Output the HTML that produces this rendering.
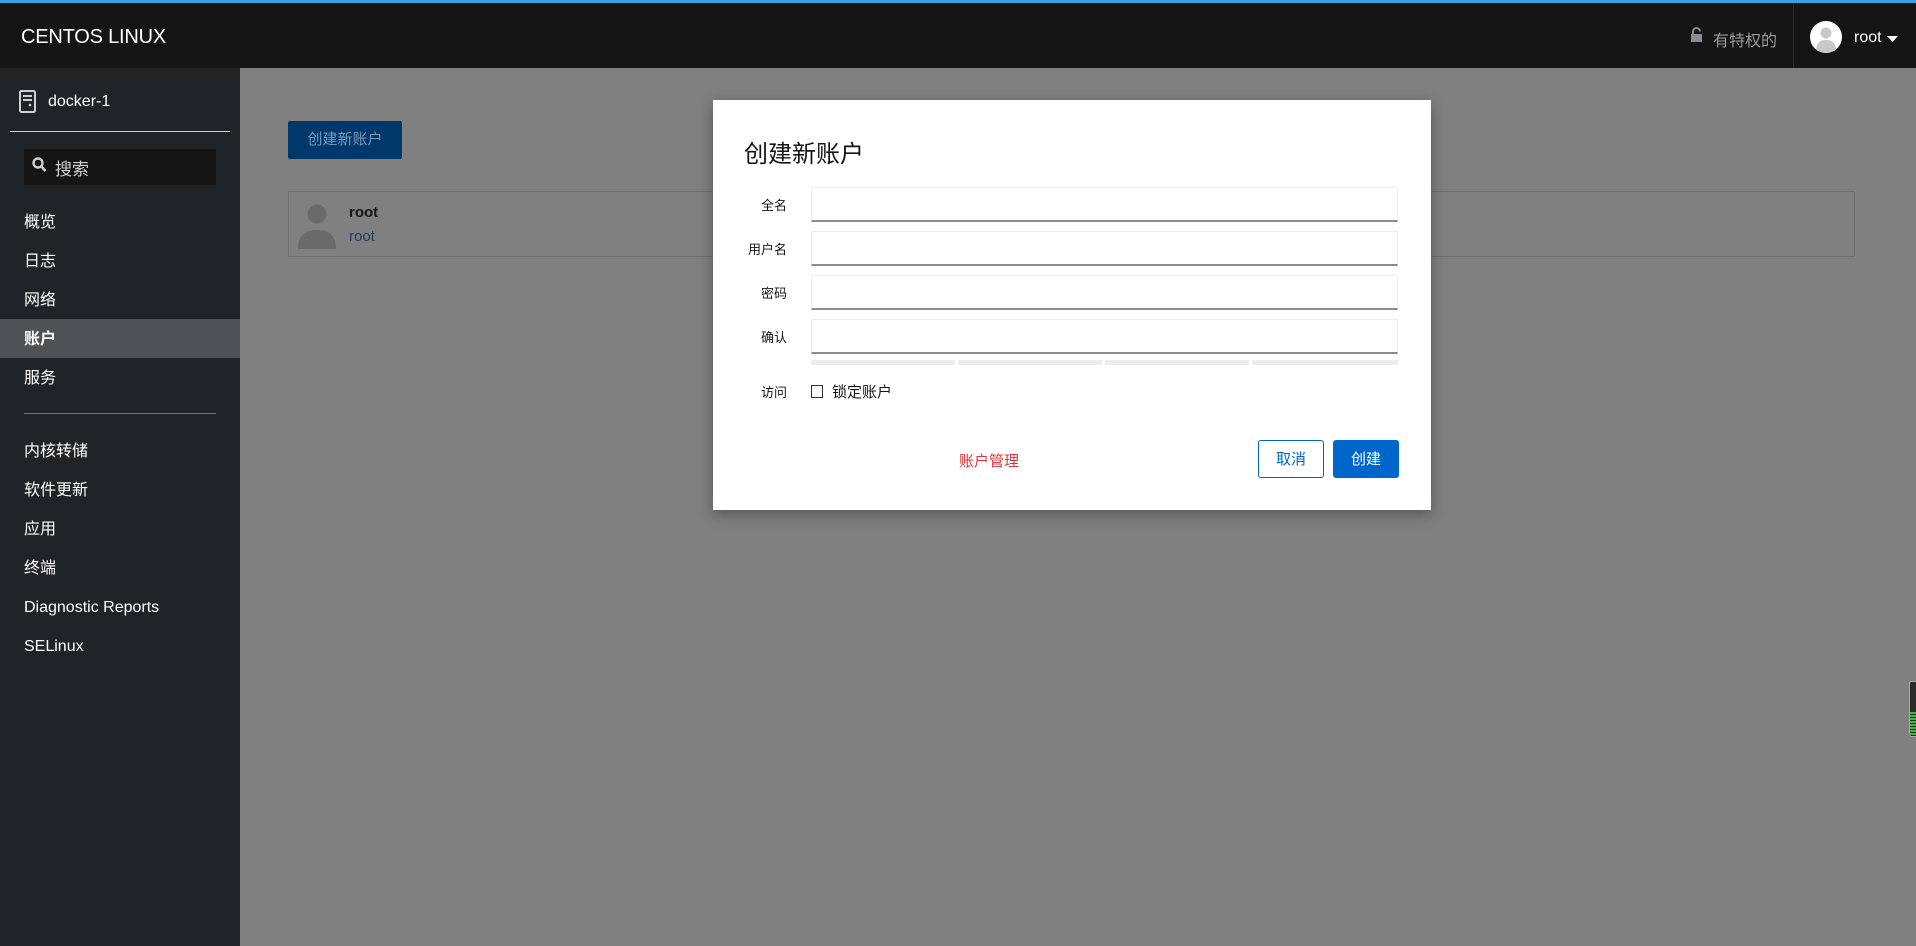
<!DOCTYPE html>
<html><head><meta charset="utf-8"><style>
*{box-sizing:border-box;margin:0;padding:0}
body{width:1916px;height:946px;overflow:hidden;position:relative;background:#808080;font-family:"Liberation Sans","Noto Sans CJK SC",sans-serif}
.abs{position:absolute}
#hdr{left:0;top:0;width:1916px;height:68px;background:#151515;border-top:3px solid #39a5dc}
#side{left:0;top:68px;width:240px;height:878px;background:#212427;color:#fff}
.nav{position:absolute;left:24px;font-size:16px;color:#fff;line-height:20px}
.lbl{position:absolute;width:60px;left:727px;text-align:right;font-size:13px;color:#151515}
.inp{position:absolute;left:811px;width:587px;height:35px;background:#fff;border:1px solid #ededed;border-bottom:2px solid #8a8d90}
.bar{position:absolute;top:360px;height:5px;width:144px;background:#ededed}
</style></head><body>
<div id="hdr" class="abs">
  <div class="abs" style="left:21px;top:23px;color:#fff;font-size:20px;letter-spacing:-0.2px">CENTOS LINUX</div>
  <svg class="abs" style="left:1690px;top:24px" width="13" height="16" viewBox="0 0 13 16"><path d="M3 7V4.5a3.5 3.5 0 0 1 7 0" fill="none" stroke="#8a8d90" stroke-width="2"/><rect x="1" y="7" width="11" height="8" fill="#8a8d90"/></svg>
  <div class="abs" style="left:1713px;top:24px;color:#9a9a9a;font-size:16px">有特权的</div>
  <div class="abs" style="left:1793px;top:0;width:1px;height:65px;background:#2c2c2c"></div>
  <svg class="abs" style="left:1810px;top:18px" width="32" height="32" viewBox="0 0 32 32"><circle cx="16" cy="16" r="16" fill="#fff"/><circle cx="16" cy="12" r="5.5" fill="#c8c8c8"/><path d="M6 28c1-7 5-9 10-9s9 2 10 9a16 16 0 0 1-20 0z" fill="#c8c8c8"/></svg>
  <div class="abs" style="left:1854px;top:26px;color:#fff;font-size:16px">root</div>
  <svg class="abs" style="left:1887px;top:33px" width="11" height="7"><path d="M0 0h11L5.5 6z" fill="#fff"/></svg>
</div>
<div id="side" class="abs">
  <svg class="abs" style="left:18px;top:22px" width="20" height="24" viewBox="0 0 20 24"><rect x="2" y="1" width="15" height="21" rx="1.5" fill="none" stroke="#d0d0d0" stroke-width="2"/><rect x="5" y="5" width="9" height="2" fill="#d0d0d0"/><rect x="5" y="9" width="9" height="2" fill="#d0d0d0"/><circle cx="12" cy="15" r="1.3" fill="#d0d0d0"/></svg>
  <div class="abs" style="left:48px;top:25px;font-size:16px">docker-1</div>
  <div class="abs" style="left:10px;top:63px;width:220px;height:1px;background:#d2d2d2"></div>
  <div class="abs" style="left:24px;top:81px;width:192px;height:36px;background:#151515"></div>
  <svg class="abs" style="left:32px;top:89px" width="15" height="16" viewBox="0 0 15 16"><circle cx="6" cy="6" r="4.5" fill="none" stroke="#d0d0d0" stroke-width="2.4"/><path d="M9 9l4.5 5" stroke="#d0d0d0" stroke-width="2.6"/></svg>
  <div class="abs" style="left:55px;top:87px;font-size:17px;color:#d0d0d0">搜索</div>
  <div class="abs" style="left:0;top:251px;width:240px;height:39px;background:#4f5255"></div>
  <div class="nav" style="top:145px">概览</div>
  <div class="nav" style="top:184px">日志</div>
  <div class="nav" style="top:223px">网络</div>
  <div class="nav" style="top:262px;font-weight:bold">账户</div>
  <div class="nav" style="top:301px">服务</div>
  <div class="abs" style="left:24px;top:345px;width:192px;height:1px;background:#72767b"></div>
  <div class="nav" style="top:374px">内核转储</div>
  <div class="nav" style="top:413px">软件更新</div>
  <div class="nav" style="top:452px">应用</div>
  <div class="nav" style="top:491px">终端</div>
  <div class="nav" style="top:530px">Diagnostic Reports</div>
  <div class="nav" style="top:569px">SELinux</div>
</div>
<div class="abs" style="left:288px;top:121px;width:114px;height:38px;background:#00386b;border-radius:2px;color:#7a98b5;font-size:15px;text-align:center;line-height:38px">创建新账户</div>
<div class="abs" style="left:288px;top:191px;width:1567px;height:66px;border:1px solid #6e6e6e"></div>
<svg class="abs" style="left:298px;top:204px" width="38" height="45" viewBox="0 0 38 45"><circle cx="19" cy="10" r="9.5" fill="#6a6a6a"/><path d="M0 45c0-14 7-19 19-19s19 5 19 19z" fill="#6a6a6a"/></svg>
<div class="abs" style="left:349px;top:204px;font-size:15px;font-weight:bold;color:#151515">root</div>
<div class="abs" style="left:349px;top:228px;font-size:15px;color:#1f3d60">root</div>
<div class="abs" style="left:1909px;top:681px;width:8px;height:56px;background:#2b2b2b;border:1px solid #aaa;border-radius:3px 0 0 3px;overflow:hidden"><div style="margin-top:30px;height:24px;background:repeating-linear-gradient(#4caf50 0 2px,#1a3a1a 2px 3px)"></div></div>
<div class="abs" style="left:713px;top:100px;width:718px;height:410px;background:#fff;box-shadow:0 4px 14px rgba(0,0,0,.35)"></div>
<div class="abs" style="left:744px;top:134px;font-size:24px;color:#151515">创建新账户</div>
<div class="lbl" style="top:195px">全名</div>
<div class="lbl" style="top:239px">用户名</div>
<div class="lbl" style="top:283px">密码</div>
<div class="lbl" style="top:327px">确认</div>
<div class="inp" style="top:187px"></div>
<div class="inp" style="top:231px"></div>
<div class="inp" style="top:275px"></div>
<div class="inp" style="top:319px"></div>
<div class="bar" style="left:811px"></div>
<div class="bar" style="left:958px"></div>
<div class="bar" style="left:1105px"></div>
<div class="bar" style="left:1252px;width:146px"></div>
<div class="lbl" style="top:382px">访问</div>
<div class="abs" style="left:811px;top:385px;width:12px;height:13px;border:1px solid #333"></div>
<div class="abs" style="left:832px;top:381px;font-size:15px;color:#151515">锁定账户</div>
<div class="abs" style="left:959px;top:450px;font-size:15px;color:#e0333a">账户管理</div>
<div class="abs" style="left:1258px;top:440px;width:66px;height:38px;border:1px solid #06c;border-radius:3px;color:#06c;font-size:15px;text-align:center;line-height:38px">取消</div>
<div class="abs" style="left:1333px;top:440px;width:66px;height:38px;background:#06c;border-radius:3px;color:#fff;font-size:15px;text-align:center;line-height:40px">创建</div>
</body></html>
